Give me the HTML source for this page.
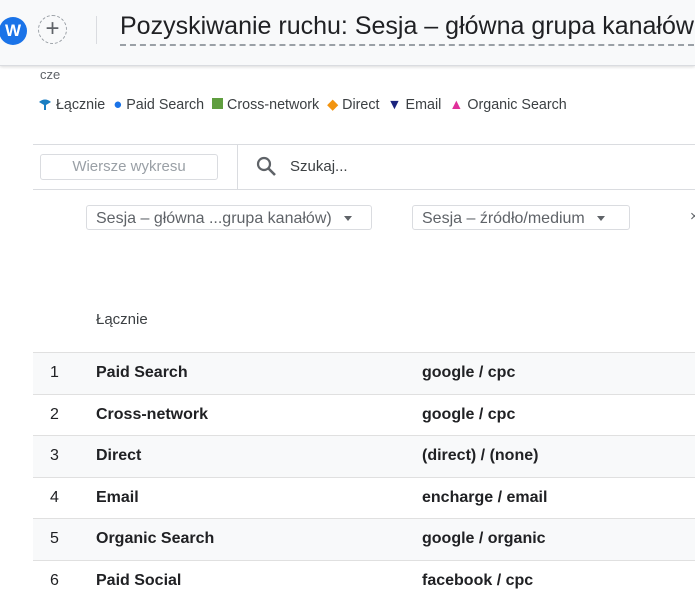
<html><head><style>
body{margin:0;width:695px;height:591px;overflow:hidden;background:#fff;font-family:"Liberation Sans",sans-serif;position:relative;color:#202124}
.a{position:absolute}
.hdr{left:0;top:0;width:695px;height:65px;background:#f8f9fa;border-bottom:1px solid #dadce0;box-shadow:0 1px 3px rgba(0,0,0,.15)}
.row{position:absolute;left:33px;width:662px;height:41px;border-top:1px solid #e0e0e0;font-size:16px;font-weight:bold;color:#202124}
.row span{position:absolute;top:11px}
.g{background:#f8f9fa}
.leg{top:96px;font-size:14.3px;color:#3c4043;white-space:nowrap}
.dd{top:205px;height:25px;border:1px solid #dadce0;border-radius:3px;font-size:16px;color:#5f6368;line-height:25px;padding-left:9px;box-sizing:border-box;white-space:nowrap}
.tri{display:inline-block;width:0;height:0;border-left:4px solid transparent;border-right:4px solid transparent;border-top:5px solid #5f6368;vertical-align:middle;margin-left:12px}
</style></head><body>
<div class="a hdr"></div>
<div class="a" style="left:-1px;top:17px;width:28px;height:28px;border-radius:50%;background:#1a73e8;color:#fff;font-weight:bold;font-size:17px;text-align:center;line-height:28px">W</div>
<div class="a" style="left:38px;top:15px;width:29px;height:29px;border-radius:50%;border:1px dashed #9aa0a6;box-sizing:border-box;text-align:center;line-height:26px;font-size:24px;color:#5f6368">+</div>
<div class="a" style="left:96px;top:16px;width:1px;height:28px;background:#dadce0"></div>
<div class="a" style="left:120px;top:12px;font-size:25px;color:#202124;white-space:nowrap;border-bottom:2px dashed #9aa0a6;padding-bottom:3px">Pozyskiwanie ruchu: Sesja – główna grupa kanałów</div>
<div class="a" style="left:40px;top:67px;font-size:13px;color:#5f6368">cze</div>
<div class="a leg" style="left:38px"><svg width="14" height="14" style="vertical-align:-2px"><path d="M1 5 Q7 0 13 5 L8 8 L8 13 L6 13 L6 8 Z" fill="#1a7ec2"/></svg> Łącznie &nbsp;<span style="color:#1a73e8;font-size:15px">●</span> Paid Search &nbsp;<span style="display:inline-block;width:11px;height:11px;background:#5f9e3f"></span> Cross-network &nbsp;<span style="color:#f29410">◆</span> Direct &nbsp;<span style="color:#1a237e">▼</span> Email &nbsp;<span style="color:#e0309a">▲</span> Organic Search</div>
<div class="a" style="left:33px;top:144px;width:662px;height:1px;background:#dadce0"></div>
<div class="a" style="left:33px;top:189px;width:662px;height:1px;background:#dadce0"></div>
<div class="a" style="left:237px;top:145px;width:1px;height:44px;background:#dadce0"></div>
<div class="a" style="left:40px;top:154px;width:178px;height:26px;border:1px solid #dadce0;border-radius:3px;box-sizing:border-box;text-align:center;line-height:24px;font-size:15px;color:#9aa0a6">Wiersze wykresu</div>
<svg class="a" style="left:256px;top:156px" width="22" height="22"><circle cx="8" cy="8" r="6" fill="none" stroke="#5f6368" stroke-width="2.2"/><path d="M12.5 12.5 L19 19" stroke="#5f6368" stroke-width="2.6"/></svg>
<div class="a" style="left:290px;top:158px;font-size:15px;color:#3c4043">Szukaj...</div>
<div class="a dd" style="left:86px;width:286px">Sesja – główna ...grupa kanałów)<span class="tri"></span></div>
<div class="a dd" style="left:412px;width:218px">Sesja – źródło/medium<span class="tri"></span></div>
<div class="a" style="left:690px;top:208px;font-size:15px;color:#5f6368">×</div>
<div class="a" style="left:96px;top:311px;font-size:15px;color:#3c4043">Łącznie</div>
<div class="row g" style="top:352px"><span style="left:17px;font-weight:normal">1</span><span style="left:63px">Paid Search</span><span style="left:389px">google / cpc</span></div>
<div class="row" style="top:394px"><span style="left:17px;font-weight:normal">2</span><span style="left:63px">Cross-network</span><span style="left:389px">google / cpc</span></div>
<div class="row g" style="top:435px"><span style="left:17px;font-weight:normal">3</span><span style="left:63px">Direct</span><span style="left:389px">(direct) / (none)</span></div>
<div class="row" style="top:477px"><span style="left:17px;font-weight:normal">4</span><span style="left:63px">Email</span><span style="left:389px">encharge / email</span></div>
<div class="row g" style="top:518px"><span style="left:17px;font-weight:normal">5</span><span style="left:63px">Organic Search</span><span style="left:389px">google / organic</span></div>
<div class="row" style="top:560px"><span style="left:17px;font-weight:normal">6</span><span style="left:63px">Paid Social</span><span style="left:389px">facebook / cpc</span></div>
</body></html>
